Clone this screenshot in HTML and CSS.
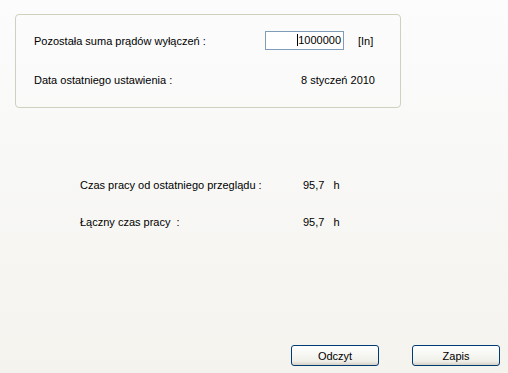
FILE: index.html
```html
<html>
  <head>
    <link rel="stylesheet" href="styles.css">
  </head>
  <body>
    <div class="page">
      <div class="group">
        <div class="group-grid">
          <span class="label">Pozostała suma prądów wyłączeń :</span>
          <div class="field"><span class="caret"></span>1000000</div>
          <span class="unit">[In]</span>
          <span class="label">Data ostatniego ustawienia :</span>
          <span class="date">8 styczeń 2010</span>
        </div>
      </div>

      <div class="hours">
        <span class="label">Czas pracy od ostatniego przeglądu :</span>
        <span class="value">95,7&nbsp;&nbsp;&nbsp;h</span>
        <span class="label">Łączny czas pracy&nbsp;&nbsp;:</span>
        <span class="value">95,7&nbsp;&nbsp;&nbsp;h</span>
      </div>

      <div class="buttons">
        <button class="btn">Odczyt</button>
        <button class="btn">Zapis</button>
      </div>
    </div>
  </body>
</html>
```

FILE: styles.css
```css
html, body {
  margin: 0;
  height: 100%;
}

body {
  background: linear-gradient(#fcfcfd, #f4f3ee);
  font-family: "Liberation Sans", Arial, sans-serif;
  font-size: 11px;
  color: #000;
}

.page {
  display: flex;
  flex-direction: column;
  min-height: 100%;
}

.group {
  margin: 14px 0 0 15px;
  width: 384px;
  height: 92px;
  border: 1px solid #d0d0bf;
  border-radius: 4px;
}

.group-grid {
  display: grid;
  grid-template-columns: 231px 79px 31px;
  grid-template-rows: 19px 19px;
  row-gap: 20px;
  align-items: center;
  padding: 16px 0 0 18px;
}

.field {
  height: 17px;
  border: 1px solid #7f9db9;
  background: #fff;
  text-align: right;
  padding-right: 2px;
  line-height: 17px;
}

.caret {
  display: inline-block;
  width: 1px;
  height: 12px;
  background: #000;
  vertical-align: -2px;
}

.unit {
  padding-left: 14px;
}

.date {
  grid-column: 2 / 4;
  justify-self: end;
}

.hours {
  display: grid;
  grid-template-columns: 223px auto;
  grid-template-rows: 15px 15px;
  row-gap: 22px;
  align-items: center;
  margin: 69px 0 0 80px;
}

.buttons {
  margin-top: auto;
  display: flex;
  justify-content: flex-end;
  gap: 33px;
  padding: 0 8px 7px 0;
}

.btn {
  width: 88px;
  height: 21px;
  border: 1px solid #003c74;
  border-radius: 3px;
  background: linear-gradient(#ffffff, #f0f0ea 80%, #d6d0c5);
  font-family: "Liberation Sans", Arial, sans-serif;
  font-size: 11px;
  color: #000;
  padding: 0;
}
```
